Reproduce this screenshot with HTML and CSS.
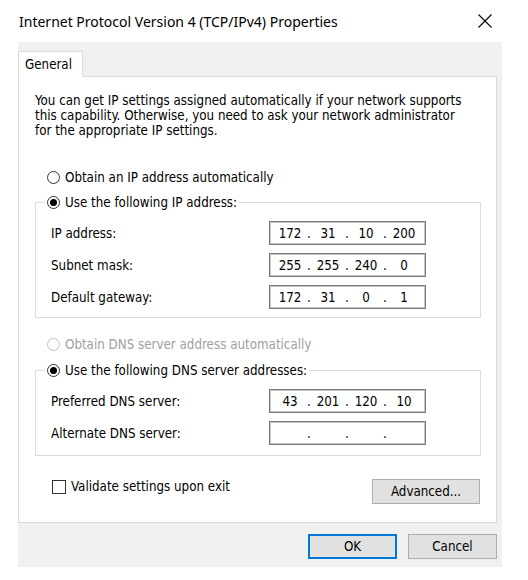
FILE: index.html
```html
<!DOCTYPE html>
<html lang="en">
<head>
    <meta charset="UTF-8">
    <title>Internet Protocol Version 4 (TCP/IPv4) Properties</title>
    <link rel="stylesheet" href="styles.css">
</head>
<body>
    <div class="titlebar">
        <span class="title">Internet Protocol Version 4 (TCP/IPv4) Properties</span>
        <svg class="close" width="14" height="14" viewBox="0 0 14 14">
            <path d="M0.5 0.5 L13.5 13.5 M13.5 0.5 L0.5 13.5" stroke="#000" stroke-width="1.1" fill="none"/>
        </svg>
    </div>

    <div class="dialog">
        <div class="tabs">
            <div class="tab">General</div>
        </div>

        <div class="panel">
            <p class="intro">You can get IP settings assigned automatically if your network supports<br>
                this capability. Otherwise, you need to ask your network administrator<br>
                for the appropriate IP settings.</p>

            <div class="radio-row first">
                <span class="radio"></span>Obtain an IP address automatically
            </div>

            <fieldset class="group">
                <legend class="radio-row"><span class="radio checked"></span>Use the following IP address:</legend>
                <div class="field-row">
                    <span class="label">IP address:</span>
                    <div class="ip-box">
                        <span class="octet">172</span><span class="dot">.</span><span class="octet">31</span><span class="dot">.</span><span class="octet">10</span><span class="dot">.</span><span class="octet">200</span>
                    </div>
                </div>
                <div class="field-row">
                    <span class="label">Subnet mask:</span>
                    <div class="ip-box">
                        <span class="octet">255</span><span class="dot">.</span><span class="octet">255</span><span class="dot">.</span><span class="octet">240</span><span class="dot">.</span><span class="octet">0</span>
                    </div>
                </div>
                <div class="field-row">
                    <span class="label">Default gateway:</span>
                    <div class="ip-box">
                        <span class="octet">172</span><span class="dot">.</span><span class="octet">31</span><span class="dot">.</span><span class="octet">0</span><span class="dot">.</span><span class="octet">1</span>
                    </div>
                </div>
            </fieldset>

            <div class="radio-row disabled">
                <span class="radio"></span>Obtain DNS server address automatically
            </div>

            <fieldset class="group dns">
                <legend class="radio-row"><span class="radio checked"></span>Use the following DNS server addresses:</legend>
                <div class="field-row">
                    <span class="label">Preferred DNS server:</span>
                    <div class="ip-box">
                        <span class="octet">43</span><span class="dot">.</span><span class="octet">201</span><span class="dot">.</span><span class="octet">120</span><span class="dot">.</span><span class="octet">10</span>
                    </div>
                </div>
                <div class="field-row">
                    <span class="label">Alternate DNS server:</span>
                    <div class="ip-box">
                        <span class="octet"></span><span class="dot">.</span><span class="octet"></span><span class="dot">.</span><span class="octet"></span><span class="dot">.</span><span class="octet"></span>
                    </div>
                </div>
            </fieldset>

            <div class="bottom-row">
                <label class="check-row"><span class="checkbox"></span>Validate settings upon exit</label>
                <button class="btn advanced">Advanced...</button>
            </div>
        </div>

        <div class="footer">
            <button class="btn default">OK</button>
            <button class="btn">Cancel</button>
        </div>
    </div>
</body>
</html>
```

FILE: styles.css
```css
* {
    margin: 0;
    padding: 0;
    box-sizing: border-box;
}

body {
    background: #fff;
    font-family: "DejaVu Sans Condensed", "Liberation Sans", Arial, sans-serif;
    font-size: 13.25px;
    color: #000;
}

.titlebar {
    height: 42px;
    display: flex;
    align-items: center;
    justify-content: space-between;
    padding: 0 36px 0 19px;
}

.title {
    font-family: "Noto Sans", sans-serif;
    font-size: 14px;
    color: #000;
}

.close {
    display: block;
}

.dialog {
    background: #f0f0f0;
    margin: 0 26px 0 18px;
    padding: 9px 5px 8px 0;
}

.tabs {
    display: flex;
}

.tab {
    background: #fff;
    border: 1px solid #d9d9d9;
    border-bottom: none;
    height: 26px;
    width: 65px;
    padding: 5px 0 0 6px;
    margin-bottom: -1px;
    position: relative;
}

.panel {
    background: #fff;
    border: 1px solid #d9d9d9;
    padding: 16px 15px 18px 16px;
}

.intro {
    line-height: 15px;
    white-space: nowrap;
}

.radio-row {
    display: flex;
    align-items: center;
    height: 20px;
    padding-left: 12px;
    white-space: nowrap;
}

.radio-row.first {
    margin-top: 29px;
}

.radio {
    width: 13px;
    height: 13px;
    border: 1px solid #333;
    border-radius: 50%;
    margin-right: 5px;
    display: flex;
    align-items: center;
    justify-content: center;
    background: #fff;
}

.radio.checked::after {
    content: "";
    width: 7px;
    height: 7px;
    border-radius: 50%;
    background: #000;
}

.disabled {
    color: #a0a0a0;
    margin-top: 16px;
}

.disabled .radio {
    border-color: #c2c2c2;
}

.group {
    border: 1px solid #dcdcdc;
    margin-top: 5px;
    padding: 9px 54px 8px 15px;
    display: flex;
    flex-direction: column;
    gap: 8px;
}

.group legend.radio-row {
    padding: 0 2px;
    margin-left: -6px;
}

.group.dns {
    margin-top: 6px;
    padding-bottom: 10px;
}

.field-row {
    display: flex;
    align-items: center;
    justify-content: space-between;
    height: 24px;
}

.ip-box {
    width: 157px;
    height: 24px;
    border: 1px solid #7a7a7a;
    box-shadow: inset 0 0 0 1px #c6c6c6;
    display: flex;
    align-items: center;
    padding-left: 6px;
}

.octet {
    width: 28px;
    text-align: center;
}

.dot {
    width: 10px;
    text-align: center;
}

.bottom-row {
    display: flex;
    justify-content: space-between;
    align-items: flex-start;
    margin-top: 23px;
    padding-right: 1px;
}

.check-row {
    display: flex;
    align-items: center;
    padding-left: 17px;
    height: 15px;
}

.checkbox {
    width: 14px;
    height: 14px;
    border: 1px solid #333;
    margin-right: 5px;
    background: #fff;
}

.btn {
    font-family: inherit;
    font-size: 13.25px;
    color: #000;
    background: #e1e1e1;
    border: 1px solid #adadad;
    height: 25px;
    width: 89px;
}

.btn.advanced {
    width: 108px;
}

.btn.default {
    border: 2px solid #0078d7;
}

.footer {
    display: flex;
    justify-content: flex-end;
    gap: 11px;
    padding-top: 11px;
}
```
